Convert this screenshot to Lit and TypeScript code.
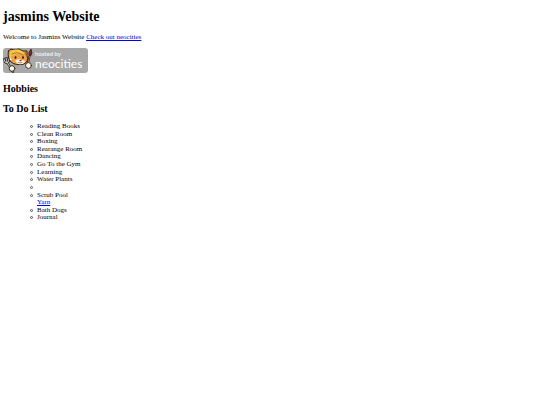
import { LitElement, html, css, nothing } from "lit";
import { customElement } from "lit/decorators.js";

interface Task {
  label: string;
  link?: string;
}

const TASKS: Task[] = [
  { label: "Reading Books" },
  { label: "Clean Room" },
  { label: "Boxing" },
  { label: "Rearange Room" },
  { label: "Dancing" },
  { label: "Go To the Gym" },
  { label: "Learning" },
  { label: "Water Plants" },
  { label: "" },
  { label: "Scrub Pool", link: "Yarn" },
  { label: "Bath Dogs" },
  { label: "Journal" },
];

@customElement("hosted-badge")
export class HostedBadge extends LitElement {
  static styles = css`
    :host {
      display: block;
    }
    .badge {
      display: block;
      width: 85px;
      height: 25px;
    }
    .words {
      fill: #fff;
      font-family: Lato, sans-serif;
    }
    .small {
      font-size: 6px;
    }
    .large {
      font-size: 12px;
    }
  `;

  render() {
    return html`
      <svg class="badge" viewBox="0 0 85 25" role="img" aria-label="hosted by neocities">
        <rect width="85" height="25" rx="3" fill="#a8a8a8" />
        <g stroke-linecap="round" stroke-linejoin="round">
          <path d="M4 14 L10 24 M1 11 L2 14 Q4 16 6 13 L5 10 M3 10 L4 14" fill="none" stroke="#2a2a2a" stroke-width="2.2" />
          <path d="M4 14 L10 24 M1 11 L2 14 Q4 16 6 13 L5 10 M3 10 L4 14" fill="none" stroke="#e8e8e8" stroke-width="0.8" />
          <path
            d="M5.500 3 L8 1 L11 2 Q16 -0.500 20 3 L24 3 L24 8 Q26 13 21 16 Q13 18 8 14 Q4 10 5.500 3 Z"
            fill="#f0a046"
            stroke="#33200f"
            stroke-width="1"
          />
          <path d="M7 5 Q9 1.500 13 1.500 Q18 1 21 5 L20 7 Q13 4 7 9 Z" fill="#f2c94a" />
          <path d="M9 6 Q14 3 20 7 M22 4 L23 7" fill="none" stroke="#9a651c" stroke-width="0.900" />
          <path d="M12 13 Q15 10 18 12 Q22 12 22 14 Q20 17 15 16 Z" fill="#fff4e4" />
          <path d="M7 9 L9 12 L7 12 Z" fill="#fff4e4" />
          <ellipse cx="12.500" cy="9.500" rx="0.900" ry="1.300" fill="#20140e" />
          <ellipse cx="20" cy="9.500" rx="0.900" ry="1.300" fill="#20140e" />
          <path d="M16 12 L19 12 L17.500 13.500 Z" fill="#7a3326" />
          <path d="M15.500 14.500 Q17 15.500 19 14.500" fill="none" stroke="#bd4b3a" stroke-width="0.800" />
          <path d="M27 6 L25 15" stroke="#33180f" stroke-width="2" />
          <path d="M27 7 L25 15" stroke="#c98763" stroke-width="0.800" />
          <path d="M28 1.500 Q25 4 26 7 L28 7.500 Q30 5 28 1.500 Z" fill="#8c2b2b" stroke="#35181a" stroke-width="0.800" />
          <circle cx="9" cy="20.500" r="2.800" fill="#fff7ea" stroke="#33200f" stroke-width="0.900" />
          <circle cx="25.500" cy="17.500" r="2.900" fill="#fff7ea" stroke="#33200f" stroke-width="0.900" />
        </g>
        <g class="words">
          <text class="small" x="32" y="8">hosted by</text>
          <text class="large" x="32" y="20">neocities</text>
        </g>
      </svg>
    `;
  }
}

@customElement("app-root")
export class AppRoot extends LitElement {
  static styles = css`
    :host {
      display: block;
      color: #000;
      font-family: "Liberation Serif", serif;
      font-size: 7px;
      line-height: 8px;
    }
    .page {
      padding: 9px 3px;
    }
    h1,
    h2,
    p,
    ul {
      margin: 0;
    }
    h1 {
      font-size: 14px;
      line-height: 16px;
      margin-bottom: 8px;
    }
    h2 {
      font-size: 10px;
      line-height: 12px;
      margin-bottom: 8px;
    }
    a {
      color: #0000ee;
      text-decoration: underline;
    }
    .badge-link {
      display: block;
      width: fit-content;
      margin: 7px 0 10px;
    }
    .tasks {
      display: grid;
      grid-template-rows: repeat(13, 1fr);
      min-height: 99px;
      padding-left: 27px;
      line-height: 7px;
      list-style: none;
    }
    .task {
      display: flex;
      gap: 4px;
    }
    .task::before {
      content: "";
      box-sizing: border-box;
      flex: none;
      width: 3px;
      height: 3px;
      margin-top: 2px;
      border: 1px solid #555;
      border-radius: 50%;
    }
    .double {
      grid-row: span 2;
    }
    .lines {
      display: grid;
      grid-auto-rows: 1fr;
    }
  `;

  render() {
    return html`
      <main class="page">
        <h1>jasmins Website</h1>
        <p>Welcome to Jasmins Website <a href="#neocities">Check out neocities</a></p>
        <a class="badge-link" href="#neocities"><hosted-badge></hosted-badge></a>
        <h2>Hobbies</h2>
        <h2>To Do List</h2>
        <ul class="tasks">
          ${TASKS.map(
            (task) => html`<li class="task ${task.link ? "double" : "single"}">
              <div class="lines">
                <span>${task.label}</span>
                ${task.link ? html`<a href="#yarn">${task.link}</a>` : nothing}
              </div>
            </li>`,
          )}
        </ul>
      </main>
    `;
  }
}
